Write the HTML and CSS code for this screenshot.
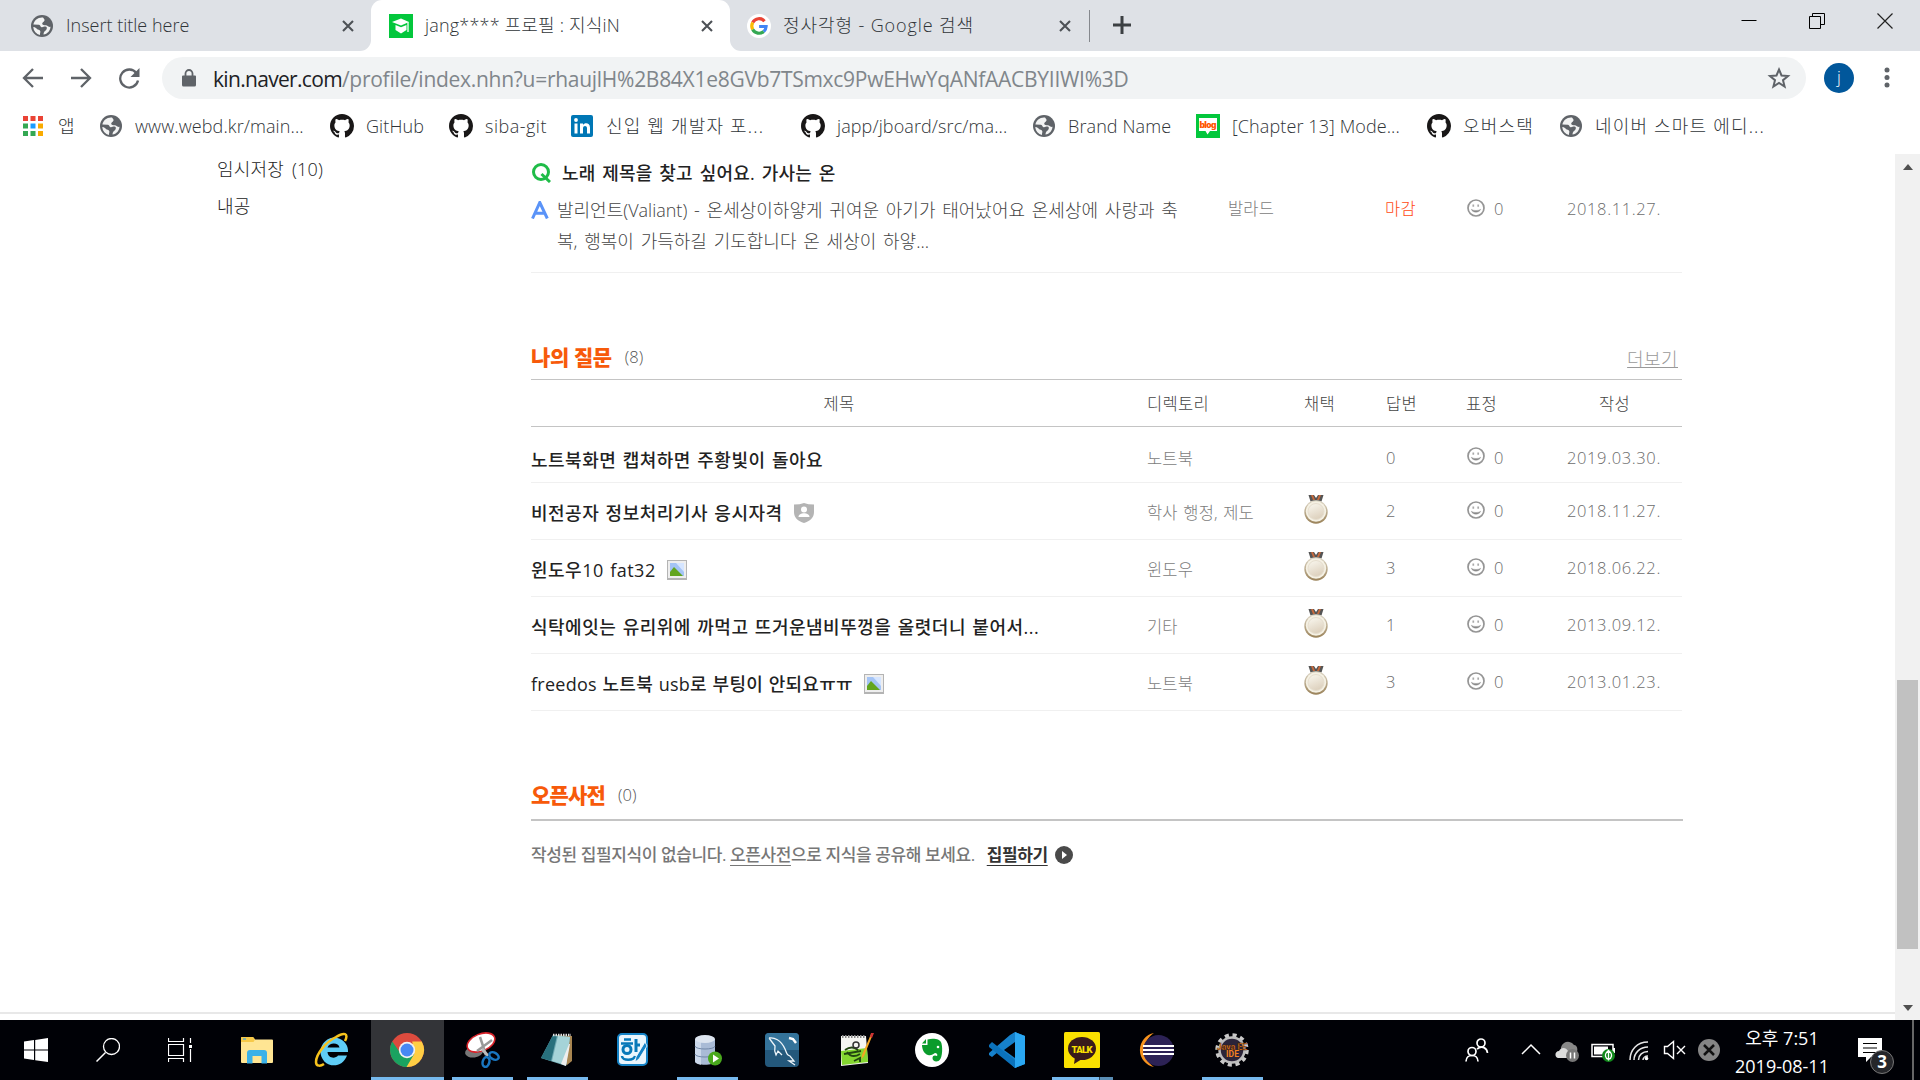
FILE: index.html
```html
<!DOCTYPE html>
<html lang="ko">
<head>
<meta charset="utf-8">
<title>jang**** 프로필 : 지식iN</title>
<link rel="stylesheet" href="styles.css">
</head>
<body>
<svg class="defs" aria-hidden="true">
  <symbol id="globe" viewBox="0 0 22 22"><circle cx="11" cy="11" r="11" fill="#5f6368"/><path d="M12 2.500C7 2 3.300 5.200 2.400 9.500l5.600.3c1.600.2 1.200 2.200 2.500 2.400 1.800.3 2.600-1 4.200-.6 1.600.5 1.400 2.400.4 3.400-1.500 1.300-2.600 2-2.600 4.600 4-.6 6.800-3.800 7-7.800-1.200.4-2.500-.4-3.600-1.200-1.200-.9-3.400 0-4.400-1.200-.8-1 .2-2 1.200-2.600.9-.6 1.100-1.700.6-2.500z" fill="#fff" opacity=".92"/><path d="M2.300 12c.3 4.200 3 7 6.700 7.900-.2-1.700.6-2.300.3-3.600-.4-1.600-2.600-1.400-3.500-2.500-.7-.8-1.800-2-3.500-1.800z" fill="#fff" opacity=".92"/><path d="M13.500 2.800c3 .8 5.500 3 6 7-1.500.7-2.800.2-4-.6-1-.7-3-.2-3-1.300s1.200-1.300 1.500-2.300c.2-.9.100-2-.5-2.800z" fill="#5f6368"/></symbol>
  <symbol id="github" viewBox="0 0 16 16"><path fill="#191717" d="M8 0C3.580 0 0 3.580 0 8c0 3.540 2.290 6.530 5.470 7.590.4.070.55-.17.55-.38 0-.19-.01-.82-.01-1.490-2.010.37-2.530-.49-2.690-.94-.09-.23-.48-.94-.82-1.130-.28-.15-.68-.52-.01-.53.63-.01 1.080.58 1.230.82.72 1.210 1.870.87 2.330.66.070-.52.28-.87.51-1.070-1.780-.2-3.640-.89-3.640-3.950 0-.87.31-1.590.82-2.150-.08-.2-.36-1.020.08-2.120 0 0 .67-.21 2.200.82.64-.18 1.320-.27 2-.27s1.360.09 2 .27c1.530-1.040 2.200-.82 2.200-.82.44 1.100.16 1.920.08 2.120.51.56.82 1.270.82 2.150 0 3.070-1.870 3.750-3.650 3.950.29.25.54.73.54 1.480 0 1.070-.01 1.930-.01 2.200 0 .21.15.46.55.38A8.010 8.010 0 0 0 16 8c0-4.420-3.580-8-8-8z"/></symbol>
  <symbol id="close" viewBox="0 0 12 12"><path d="M1 1l10 10M11 1L1 11" stroke="#4d5156" stroke-width="2.100"/></symbol>
  <symbol id="smile" viewBox="0 0 18 18"><circle cx="9" cy="9" r="8" fill="#fff" stroke="#959595" stroke-width="1.700"/><path d="M6.300 5.500v2.200M11.200 5.500v2.200" stroke="#aaa" stroke-width="1.700"/><path d="M4.300 10.300c1.200 3.800 8 3.800 9.400 0-2 1.600-7.400 1.600-9.400 0z" fill="#858585" stroke="#999" stroke-width=".5"/></symbol>
  <linearGradient id="coin" x1="0" y1="0" x2="0.400" y2="1"><stop offset="0" stop-color="#faf8f0"/><stop offset="1" stop-color="#ded2bf"/></linearGradient>
  <linearGradient id="rim" x1="0" y1="0" x2="0" y2="1"><stop offset="0" stop-color="#ddd6c6"/><stop offset="1" stop-color="#9a8259"/></linearGradient>
  <symbol id="medal" viewBox="0 0 24 29"><path d="M4.500 0H10l2 3 2-3h5.500l-2 6.500h-11z" fill="#555"/><path d="M7 0h2l2 5H9zM15 0h2l-2 5h-2z" fill="#c76a3c"/><circle cx="12" cy="17" r="11.700" fill="url(#rim)"/><circle cx="12" cy="16.500" r="10.200" fill="#f5f1e4"/><circle cx="12" cy="16.500" r="8" fill="url(#coin)" stroke="#e6dece"/></symbol>
  <symbol id="picture" viewBox="0 0 20 20"><path d="M0 0h20v20H0z" fill="#b4b4b4"/><path d="M1 1h18v17H1z" fill="#eee"/><path d="M3 3h14v13H3z" fill="#a4c4f5"/><path d="M9 3l8 0v9z" fill="#d5e5ff"/><path d="M3 16v-4l4-5 9 9z" fill="#62a51f"/></symbol>
</svg>

<header class="tabstrip">
  <div class="tab tab-first"><svg class="i22"><use href="#globe"/></svg><span>Insert title here</span><svg class="x"><use href="#close"/></svg></div>
  <div class="tab tab-active"><svg class="i24" viewBox="0 0 24 24"><path d="M0 0h24v24H0z" fill="#03c73c"/><path d="M3 8l9-3.500 8 3.500-8 3.500z" fill="#fff"/><path d="M6.500 11l5.500 2.300 5.500-2.300v5L12 19.500 6.500 16z" fill="#fff"/><path d="M19 8v10" stroke="#fff" stroke-width="1.300"/></svg><span>jang**** 프로필 : 지식iN</span><svg class="x"><use href="#close"/></svg></div>
  <div class="tab tab-last"><svg class="i24" viewBox="0 0 24 24"><circle cx="12" cy="12" r="12" fill="#fff"/><g fill="none" stroke-width="3.200"><path d="M17.500 7.200A7.200 7.200 0 0 0 5.700 8.500" stroke="#ea4335"/><path d="M5.700 8.500a7.400 7.400 0 0 0 0 7" stroke="#fbbc05"/><path d="M5.700 15.500a7.200 7.200 0 0 0 11 2" stroke="#34a853"/><path d="M16.700 17.500a7 7 0 0 0 2.400-5h-7" stroke="#4285f4"/></g></svg><span>정사각형 - Google 검색</span><svg class="x"><use href="#close"/></svg></div>
  <svg class="plus" viewBox="0 0 18 18"><path d="M9 0v18M0 9h18" stroke="#3c4043" stroke-width="3"/></svg>
  <div class="window-buttons">
    <svg viewBox="0 0 16 16"><path d="M.5 7.500h15" stroke="#000"/></svg>
    <svg viewBox="0 0 16 16"><path d="M.5 3.500h11v12H.5zM3.500 3.500v-3h12v11h-4" fill="none" stroke="#000"/></svg>
    <svg viewBox="0 0 16 16"><path d="M.5.5l15 15M15.500.5l-15 15" stroke="#222" stroke-width="1.200"/></svg>
  </div>
</header>

<div class="toolbar">
  <svg class="nav" viewBox="0 0 22 22"><path d="M21 11H2.500M11 2l-9 9 9 9" fill="none" stroke="#5f6368" stroke-width="2.300"/></svg>
  <svg class="nav" viewBox="0 0 22 22"><path d="M1 11h18.500M11 2l9 9-9 9" fill="none" stroke="#5f6368" stroke-width="2.300"/></svg>
  <svg class="nav" viewBox="0 0 22 22"><path d="M18.500 6.200A9 9 0 1 0 20 13.500" fill="none" stroke="#5f6368" stroke-width="2.300"/><path d="M21.500 1v9h-9z" fill="#5f6368"/></svg>
  <div class="omnibox">
    <svg class="lock" viewBox="0 0 14 18"><path d="M1 6.500h12a1 1 0 0 1 1 1V16a1.500 1.500 0 0 1-1.500 1.500h-11A1.500 1.500 0 0 1 0 16V7.500a1 1 0 0 1 1-1z" fill="#5f6368"/><path d="M3.500 7V4.500a3.500 3.500 0 0 1 7 0V7" fill="none" stroke="#5f6368" stroke-width="1.800"/></svg>
    <div class="url"><span class="host">kin.naver.com</span>/profile/index.nhn?u=rhaujlH%2B84X1e8GVb7TSmxc9PwEHwYqANfAACBYIIWI%3D</div>
    <svg class="star" viewBox="0 0 24 24"><path d="M12 3.500l2.500 6 6.500.5-5 4.200 1.600 6.300-5.600-3.500-5.600 3.500L8 14.200 3 10l6.500-.5z" fill="none" stroke="#5f6368" stroke-width="2"/></svg>
  </div>
  <div class="avatar">j</div>
  <svg class="dots" viewBox="0 0 6 22"><g fill="#5f6368"><circle cx="3" cy="3" r="2.500"/><circle cx="3" cy="10.500" r="2.500"/><circle cx="3" cy="18" r="2.500"/></g></svg>
</div>

<nav class="bookmarks">
  <a class="apps"><svg class="i20" viewBox="0 0 20 20"><g fill="#ea4335"><path d="M0 0h5v5H0zM7.500 0h5v5h-5zM15 0h5v5h-5z"/></g><path d="M0 7.500h5v5H0zM0 15h5v5H0zM7.500 15h5v5h-5z" fill="#34a853"/><path d="M7.500 7.500h5v5h-5z" fill="#1a9bff"/><path d="M15 7.500h5v5h-5zM15 15h5v5h-5z" fill="#f9ab00"/></svg><span>앱</span></a>
  <a><svg class="i22"><use href="#globe"/></svg><span>www.webd.kr/main...</span></a>
  <a><svg class="i24"><use href="#github"/></svg><span>GitHub</span></a>
  <a><svg class="i24"><use href="#github"/></svg><span class="loose">siba-git</span></a>
  <a><svg class="i22" viewBox="0 0 22 22"><rect width="22" height="22" rx="2" fill="#0077b5"/><path d="M3.500 8.500h3v10h-3zM9 8.500h3V10c1.500-2.500 7-2.500 7 2.500v6h-3v-5.300c0-3-4-3-4 0v5.300H9z" fill="#fff"/><circle cx="5" cy="5" r="1.900" fill="#fff"/></svg><span class="hangul">신입 웹 개발자 포...</span></a>
  <a><svg class="i24"><use href="#github"/></svg><span>japp/jboard/src/ma...</span></a>
  <a><svg class="i22"><use href="#globe"/></svg><span>Brand Name</span></a>
  <a><svg class="i24" viewBox="0 0 24 24"><path d="M0 0h24v24H0z" fill="#03c73c"/><path d="M3 4h18v13h-7l-2.500 3.500L9.500 17H3z" fill="#fff"/><text x="3.500" y="13.500" font-size="8.500" font-weight="900" fill="#f50" textLength="17" font-family="Inter">blog</text></svg><span>[Chapter 13] Mode...</span></a>
  <a><svg class="i24"><use href="#github"/></svg><span class="hangul">오버스택</span></a>
  <a><svg class="i22"><use href="#globe"/></svg><span class="hangul">네이버 스마트 에디...</span></a>
</nav>

<div class="viewport">
  <main class="page">
    <aside class="side"><a>임시저장 (10)</a><a>내공</a></aside>
    <div class="content">
      <section class="answer">
        <h3 class="qline"><svg class="i20" viewBox="0 0 20 20"><circle cx="10" cy="9" r="7.500" fill="none" stroke="#1fbc48" stroke-width="3"/><path d="M10.500 11l8.500 8" stroke="#1fbc48" stroke-width="3"/></svg><span>노래 제목을 찾고 싶어요. 가사는 온</span></h3>
        <div class="arow">
          <div class="abody"><svg class="amark" viewBox="0 0 18 18"><path d="M1.500 17.500L8.800 1.500l7.500 16M4.500 12.300h9" fill="none" stroke="#5a93f8" stroke-width="3"/></svg><p>발리언트(Valiant) - 온세상이하얗게 귀여운 아기가 태어났어요 온세상에 사랑과 축<br>복, 행복이 가득하길 기도합니다 온 세상이 하얗...</p></div>
          <span class="dir">발라드</span><span class="closed">마감</span><span class="emo"><svg><use href="#smile"/></svg>0</span><span class="date">2018.11.27.</span>
        </div>
      </section>

      <section class="questions">
        <div class="section-head"><h2>나의 질문</h2><span class="cnt">(8)</span><a class="more">더보기</a></div>
        <div class="row thead"><span class="center">제목</span><span>디렉토리</span><span>채택</span><span>답변</span><span>표정</span><span class="written">작성</span></div>
        <div class="row first"><span class="title"><b>노트북화면 캡쳐하면 주황빛이 돌아요</b></span><span class="dir">노트북</span><span></span><span class="num">0</span><span class="emo"><svg><use href="#smile"/></svg>0</span><span class="date">2019.03.30.</span></div>
        <div class="row"><span class="title"><b>비전공자 정보처리기사 응시자격</b><svg class="i20" viewBox="0 0 20 20"><path d="M0 1.500Q6 1.500 10 0q4 1.500 10 1.500V9c0 6-4 9-10 11C4 18 0 15 0 9z" fill="#b4b4b4"/><circle cx="10" cy="6.500" r="3" fill="#fff"/><path d="M4.500 14c0-5 11-5 11 0z" fill="#fff"/></svg></span><span class="dir">학사 행정, 제도</span><span class="medal"><svg><use href="#medal"/></svg></span><span class="num">2</span><span class="emo"><svg><use href="#smile"/></svg>0</span><span class="date">2018.11.27.</span></div>
        <div class="row"><span class="title"><b>윈도우10 fat32</b><svg class="i20 pic"><use href="#picture"/></svg></span><span class="dir">윈도우</span><span class="medal"><svg><use href="#medal"/></svg></span><span class="num">3</span><span class="emo"><svg><use href="#smile"/></svg>0</span><span class="date">2018.06.22.</span></div>
        <div class="row"><span class="title"><b>식탁에잇는 유리위에 까먹고 뜨거운냄비뚜껑을 올렷더니 붙어서...</b></span><span class="dir">기타</span><span class="medal"><svg><use href="#medal"/></svg></span><span class="num">1</span><span class="emo"><svg><use href="#smile"/></svg>0</span><span class="date">2013.09.12.</span></div>
        <div class="row"><span class="title"><b class="mixed">freedos 노트북 usb로 부팅이 안되요ㅠㅠ</b><svg class="i20 pic"><use href="#picture"/></svg></span><span class="dir">노트북</span><span class="medal"><svg><use href="#medal"/></svg></span><span class="num">3</span><span class="emo"><svg><use href="#smile"/></svg>0</span><span class="date">2013.01.23.</span></div>
      </section>

      <section class="opendic">
        <div class="section-head"><h2>오픈사전</h2><span class="cnt">(0)</span></div>
        <p class="empty"><span>작성된 집필지식이 없습니다. <u>오픈사전</u>으로 지식을 공유해 보세요.</span><a class="write">집필하기</a><svg class="go" viewBox="0 0 18 18"><circle cx="9" cy="9" r="9" fill="#4a4a4a"/><path d="M7 5l5 4-5 4z" fill="#fff"/></svg></p>
      </section>
    </div>
  </main>
  <div class="scrollbar"><i class="up"></i><i class="thumb"></i><i class="down"></i></div>
</div>

<footer class="taskbar">
  <div class="sys">
    <svg viewBox="0 0 24 24"><path d="M0 3.500l10-1.400v9.400H0zM11.200 2L24 0v11.500H11.200zM0 12.600h10V22L0 20.500zM11.200 12.600H24V24l-12.800-1.800z" fill="#fff"/></svg>
    <svg viewBox="0 0 24 24"><circle cx="15.500" cy="8.500" r="8" fill="none" stroke="#fff" stroke-width="1.300"/><path d="M9.500 14.500L.5 23.500" stroke="#fff" stroke-width="1.500"/></svg>
    <svg viewBox="0 0 24 24"><path d="M.5 0v3.500h15V0M.5 24v-3.500h15V24M.5 6.500h15v11H.5zM22.500 0v5M22.500 11v13" fill="none" stroke="#fff" stroke-width="1.200"/><path d="M21 7h3v3h-3z" fill="#fff"/></svg>
  </div>
  <div class="apps-row">
    <div class="app"><svg viewBox="0 0 36 36"><path d="M2 6q0-1 1-1h11l2 2.500h17q1 0 1 1V30q0 1-1 1H3q-1 0-1-1z" fill="#ffe593"/><path d="M2 6q0-1 1-1h11l2 2.500L14.500 10H2z" fill="#f7c948"/><path d="M4 7h3" stroke="#3ba7e6" stroke-width="1.200"/><path d="M8 31.500V21q0-3 3-3h14q3 0 3 3v10.500h-5.500V24h-9v7.500z" fill="#3bb1e8"/></svg></div>
    <div class="app"><svg viewBox="0 0 36 36"><path d="M34 20H13.500c.4 6.500 8 7 10.500 3.500h9C30 32 22 35 15 32.500S4 20 8 13.500 18 4 25 6.500c6 2.500 9.500 7.500 9 13.500zM13.500 15.500h12c-.6-5.500-10.500-5.500-12 0z" fill="#5fcdf6"/><path d="M31 9c4-8-1-9-9-4C12 10 2 22 2 30c0 5 5 4 8 2" fill="none" stroke="#f6c21c" stroke-width="2.500"/></svg></div>
    <div class="app on current"><svg viewBox="0 0 36 36"><circle cx="18" cy="18" r="17" fill="#dd4b3e"/><path d="M3.300 9.500A17 17 0 0 0 18 35l8-13.500-15-1z" fill="#1aa260"/><path d="M32.700 9.500A17 17 0 0 1 17.500 35l7.700-13-2-12.500z" fill="#ffce44"/><circle cx="18" cy="18" r="8.200" fill="#f1f1f1"/><circle cx="18" cy="18" r="6.500" fill="#4688f4"/></svg></div>
    <div class="app on"><svg viewBox="0 0 36 36"><ellipse cx="10" cy="20" rx="9" ry="5.500" fill="#777" transform="rotate(-8 10 20)"/><ellipse cx="17" cy="10.500" rx="14.500" ry="8.500" fill="#fff" stroke="#d8232a" stroke-width="1.600" transform="rotate(-22 17 10.500)"/><path d="M16 5l6 18M28 8L13 19" stroke="#999" stroke-width="2.500"/><path d="M18 17l6 7" stroke="#bbb" stroke-width="3"/><ellipse cx="22" cy="30" rx="3.300" ry="5" fill="none" stroke="#1976c0" stroke-width="2.500" transform="rotate(15 22 30)"/><ellipse cx="30" cy="24" rx="5" ry="3.300" fill="none" stroke="#1976c0" stroke-width="2.500" transform="rotate(30 30 24)"/></svg></div>
    <div class="app on"><svg viewBox="0 0 36 36"><path d="M15 3l18 1v25l-5 4-6-4z" fill="#a88651"/><path d="M14 3l17 2-4 29L2 26z" fill="#6ea9b3"/><path d="M14 3l4 .5L12 29 2 26z" fill="#28707d"/><path d="M19 4l12 1-4 28-14-4z" fill="#a5d3d8"/><path d="M14 3h18" stroke="#ddd" stroke-width="2.500" stroke-dasharray="1.500 1"/><path d="M22 32l5 2 4-22h-1z" fill="#eee"/></svg></div>
    <div class="app"><svg viewBox="0 0 36 36"><rect x="4" y="2" width="29" height="31" rx="4" fill="#eaf6fd" stroke="#1482c5" stroke-width="2"/><path d="M10 7.500h7M7 11.500h12" stroke="#0879b9" stroke-width="2.500"/><circle cx="13" cy="17.500" r="4" fill="none" stroke="#0879b9" stroke-width="3"/><path d="M22 7v13M22 13h4" fill="none" stroke="#0879b9" stroke-width="3"/><path d="M8 24c0 5 12 5 13 0" fill="none" stroke="#0879b9" stroke-width="2.500"/><path d="M31 10L22 25l-1 5 4-3 8-13z" fill="#1482c5" stroke="#fff" stroke-width=".8"/></svg></div>
    <div class="app on"><svg viewBox="0 0 36 36"><path d="M6 7v22c0 5 20 5 20 0V7z" fill="#a9bbd6"/><path d="M6 7v22c0 2 3 3.500 6 3.700V8z" fill="#cbd8ea"/><path d="M6 14c0 4 20 4 20 0M6 22c0 4 20 4 20 0" fill="none" stroke="#7288a8"/><ellipse cx="16" cy="7" rx="10" ry="4" fill="#dce4ef"/><circle cx="26" cy="26.500" r="7" fill="#49a81d"/><path d="M24 22.500l6 4-6 4z" fill="#fff"/></svg></div>
    <div class="app"><svg viewBox="0 0 36 36"><rect x="1" y="1" width="34" height="34" rx="4" fill="#24587b"/><path d="M1 5q0-4 4-4h26q4 0 4 4v13H1z" fill="#34739a"/><path d="M5 6c5-1 12 2 16 11 2 5 2 6 5 7l4 5h-5l6 4M5 6l6 8c-1 5 0 7 1 9l2-4 4 4" fill="none" stroke="#eef5f9" stroke-width="1.300"/><path d="M25 6l4 1 3 4" stroke="#fff" stroke-width="2.500" fill="none"/></svg></div>
    <div class="app"><svg viewBox="0 0 36 36"><path d="M2 4h25l2 27-27 3z" fill="#f5f5f2"/><path d="M2 19l26-3 1 14-26 3z" fill="#84d630"/><path d="M3 4.500h24" stroke="#888" stroke-width="3" stroke-dasharray="1.500 1.500"/><path d="M6 18q7-5 13 0M5 22l17-3M8 20q5 7 13 2M15 29l6-3v4" fill="none" stroke="#224511" stroke-width="1.900"/><circle cx="17" cy="13" r="3" fill="none" stroke="#333" stroke-width="1.500"/><path d="M34 2L25 24l-2.500 3 .5-4L32 2z" fill="#f4a622"/><path d="M32 1h3l-2 5-2-1z" fill="#c33"/></svg></div>
    <div class="app"><svg viewBox="0 0 36 36"><circle cx="18" cy="18" r="17" fill="#fff"/><path d="M8 13h5.500V7.500c6-1.500 13-.500 14 4 1.500 6 .5 16-3 17.500-3 1-6 0-6-3s3-3 4.500-2c1-1 0-3-2-3-2 1-4 3-7 2-4-1-6-6-6-10z" fill="#0a9c2c"/><path d="M8 11.500L12 7v4.500z" fill="#0a9c2c"/><circle cx="24" cy="15" r="1.300" fill="#fff"/></svg></div>
    <div class="app"><svg viewBox="0 0 36 36"><path d="M26 0l10 4v28l-10 4L9 20l-6 5-3-2v-2L21 3z" fill="#1681cb"/><path d="M0 13l3-3 23 18v8L0 15z" fill="#0b72bb"/><path d="M26 0l10 4v28l-10 4z" fill="#2aa7f2"/><path d="M26 10v16L15 18z" fill="#000106"/></svg></div>
    <div class="app on multi"><svg viewBox="0 0 36 36"><rect width="36" height="36" rx="1.500" fill="#fae100"/><ellipse cx="18" cy="16.500" rx="14" ry="11.500" fill="#391b1b"/><path d="M11 25l-1 7 8-5z" fill="#391b1b"/><text x="7.500" y="20.500" font-size="9.500" font-weight="900" fill="#fae100" textLength="21" font-family="Roboto">TALK</text></svg></div>
    <div class="app"><svg viewBox="0 0 36 36"><path d="M15 1A17.300 17.300 0 0 0 15 35A20 20 0 0 1 15 1z" fill="#f7941e"/><circle cx="19.500" cy="18.500" r="15.500" fill="#2c2255"/><path d="M4 14h31M4 18h31M4 22h31" stroke="#fff" stroke-width="2"/></svg></div>
    <div class="app on"><svg viewBox="0 0 36 36"><circle cx="18" cy="18" r="14.500" fill="none" stroke="#c9c9c9" stroke-width="4.500" stroke-dasharray="4 3.600"/><circle cx="18" cy="18" r="12.500" fill="#2b2439" stroke="#bdbdbd" stroke-width="2.500"/><text x="3" y="17.500" font-size="8.500" font-weight="700" fill="#f4811f" stroke="#301400" stroke-width=".3" textLength="30" font-family="Roboto">Java EE</text><text x="12" y="25" font-size="8.500" font-weight="700" fill="#f4811f" textLength="13" font-family="Roboto">IDE</text></svg></div>
  </div>
  <div class="tray">
    <svg viewBox="0 0 24 24"><g fill="none" stroke="#fff" stroke-width="1.700"><circle cx="16" cy="5" r="4"/><circle cx="7" cy="13.500" r="4"/><path d="M1 23.500c0-8 12-8 12 0M12 11c5-4 10-1 10.500 4"/></g></svg>
    <svg viewBox="0 0 24 24"><path d="M3 16l9-9 9 9" fill="none" stroke="#fff" stroke-width="1.500"/></svg>
    <svg viewBox="0 0 24 24"><path d="M7 15a6.500 6.500 0 0 1 12-8c4 0 5 8 0 9z" fill="#888"/><path d="M3 20c-4-1-3-7 1-7 2-4 7-4 9 0l5 7z" fill="#ddd"/><circle cx="17.500" cy="17.500" r="6.500" fill="#777"/><path d="M15.500 14.500v6M19.500 14.500v6" stroke="#fff" stroke-width="1.500"/></svg>
    <svg viewBox="0 0 24 24"><path d="M1 6.500h21v12H1z" fill="none" stroke="#fff" stroke-width="1.500"/><path d="M3 8.500h14v8H3zM22 10h2v5h-2z" fill="#fff"/><circle cx="17.500" cy="17.500" r="6.500" fill="#10891b"/><path d="M17.500 12.500c-5 4-3 8 0 9 3-1 5-5 0-9v10" fill="none" stroke="#fff" stroke-width="1.300"/></svg>
    <svg viewBox="0 0 24 24"><g fill="none" stroke="#fff" stroke-width="1.500"><path d="M3 22C3 12 10 4 21 4M7 22c0-7 6-13 14-13M11.500 22c0-5 4-8.500 9.500-8.500M16 22c0-2 2-4 5-4" opacity=".9"/></g><circle cx="19.500" cy="20.500" r="1.800" fill="#fff"/></svg>
    <svg class="speaker" viewBox="0 0 24 24"><path d="M2.500 8.500h3l6-5v17l-6-5h-3z" fill="none" stroke="#fff" stroke-width="1.400"/><path d="M15 8l8 8M23 8l-8 8" stroke="#fff" stroke-width="1.400"/></svg>
    <svg viewBox="0 0 24 24"><circle cx="12" cy="12" r="11" fill="#858585"/><path d="M7 7l10 10M17 7L7 17" stroke="#111" stroke-width="2.500"/></svg>
    <div class="clock"><span>오후 7:51</span><span>2019-08-11</span></div>
    <div class="notify"><svg viewBox="0 0 36 38"><path d="M0 0h24v19H13l-5 5v-5H0z" fill="#fff"/><path d="M5 5.500h14M5 10h14M5 14.500h14" stroke="#000" stroke-width="1.200"/><circle cx="24" cy="24" r="11.500" fill="#25262a" stroke="#777"/><text x="24" y="30" font-size="17" font-weight="700" fill="#fff" text-anchor="middle">3</text></svg></div>
    <i class="edge"></i>
  </div>
</footer>
</body>
</html>
```
FILE: styles.css
```css
* { box-sizing: border-box; }
body {
  margin: 0; width: 1920px; height: 1080px; overflow: hidden; background: #fff;
  font: 300 18px/24px "Open Sans", "Noto Sans CJK KR", sans-serif;
  color: #303438; display: flex; flex-direction: column; white-space: nowrap;
}
svg { display: block; flex: none; }
.defs { position: absolute; width: 0; height: 0; }
h2, h3, p { margin: 0; font-size: inherit; font-weight: inherit; }
.i20 { width: 20px; height: 20px; }
.i22 { width: 22px; height: 22px; margin: 0 1px; }
.i24 { width: 24px; height: 24px; }

/* tab strip */
.tabstrip { height: 51px; flex: none; background: #fff; display: flex; }
.tab { display: flex; align-items: center; gap: 12px; background: #dee1e6; }
.tab span { padding-bottom: 2px; }
.tab .x { width: 12px; height: 12px; margin-left: auto; }
.tab-first { width: 371px; padding: 0 17px 0 30px; border-radius: 0 0 11px 0; }
.tab-active { width: 359px; padding: 0 17px 0 18px; background: linear-gradient(#dee1e6 20px, transparent 0); position: relative; z-index: 0; letter-spacing: .19px; }
.tab-active::before { content: ""; position: absolute; z-index: -1; inset: 0; background: #fff; border-radius: 11px 11px 0 0; }
.tab-last { width: 360px; padding: 0 18px 0 17px; border-radius: 0 0 0 11px; border-right: 1px solid #85888d; border-image: linear-gradient(#dee1e6 11px, #85888d 11px, #85888d 41px, #dee1e6 41px) 1; letter-spacing: .9px; }
.plus { width: 18px; height: 18px; }
.tabstrip > .plus { box-sizing: content-box; padding: 16px 0 17px 23px; background: #dee1e6; }
.window-buttons { flex: 1; display: flex; justify-content: flex-end; gap: 52px; padding: 13px 27px 0 0; background: #dee1e6; }
.window-buttons svg { width: 16px; height: 16px; }

/* toolbar */
.toolbar { height: 54px; flex: none; display: flex; align-items: center; padding-left: 22px; }
.nav { width: 22px; height: 22px; margin-right: 26px; }
.omnibox { width: 1644px; height: 42px; margin-left: -4px; border-radius: 21px; background: #f1f3f4; display: flex; align-items: center; padding: 0 15px 0 20px; }
.lock { width: 14px; height: 18px; margin-right: 17px; }
.url { flex: 1; font-size: 21px; font-weight: 400; color: #80868b; letter-spacing: -.28px; padding-top: 1px; }
.host { color: #202124; letter-spacing: -.68px; }
.star { width: 24px; height: 24px; }
.avatar { width: 30px; height: 30px; border-radius: 50%; background: #01579b; color: #fff; margin-left: 18px; text-align: center; line-height: 27px; font-size: 17px; }
.dots { width: 6px; height: 22px; margin-left: 30px; }

/* bookmarks */
.bookmarks { height: 49px; flex: none; padding: 0 0 7px 22px; display: grid; grid-template-columns: 77px 230px 119px 122px 230px 232px 163px 231px 133px 210px; align-items: center; letter-spacing: .1px; }
.bookmarks a { display: flex; align-items: center; gap: 12px; }
.bookmarks span { padding-bottom: 1px; }
.bookmarks .apps { gap: 15px; }
.bookmarks .i24, .bookmarks .i20 { margin-left: 1px; }
.bookmarks .loose { letter-spacing: .5px; }
.bookmarks .hangul { letter-spacing: 1.18px; }

/* page */
.viewport { height: 866px; flex: none; display: flex; }
.page { width: 1895px; display: flex; border-bottom: 6px solid #fff; box-shadow: inset 0 -2px #e8e8e8; }
.side { width: 531px; padding: 3px 0 0 217px; display: flex; flex-direction: column; gap: 13px; color: #222; word-spacing: 3px; letter-spacing: .2px; }
.content { width: 1152px; }
.answer { height: 119px; border-bottom: 1px solid #f0f0f0; margin-right: 1px; }
.qline { display: flex; gap: 11px; padding-top: 7px; align-items: center; color: #222; font-weight: 500; letter-spacing: .2px; word-spacing: 1.900px; }
.arow { display: grid; grid-template-columns: 697px 157px 81px 101px 115px; padding-top: 10px; font-size: 16.500px; }
.arow > :not(.abody) { padding-top: 2px; }
.abody { display: flex; gap: 8px; font-size: 18px; line-height: 31px; color: #444; word-spacing: 2.100px; }
.amark { width: 18px; height: 18px; margin-top: 6px; }
.dir { color: #7c7c7c; font-size: 16.500px; letter-spacing: .15px; word-spacing: 1.200px; }
.closed { color: #ff4a10; letter-spacing: .3px; }
.emo { display: flex; gap: 9px; color: #6c6c6c; align-items: center; align-self: start; }
.emo svg { width: 18px; height: 18px; margin: -3px 0 0 1px; }
.date, .num { color: #6c6c6c; font-size: 16.500px; letter-spacing: .62px; }
.section-head { display: flex; align-items: center; margin-right: 1px; border-bottom: 1px solid #c4c4c4; color: #555; font-size: 16.500px; }
.section-head h2 { font-size: 21px; font-weight: 900; color: #f75a0a; margin-right: 13px; letter-spacing: -.4px; }
.questions .section-head { height: 53px; margin-top: 54px; padding-top: 8px; }
.more { margin: 4px 4px 0 auto; font-size: 18px; color: #999; text-decoration: underline; letter-spacing: .4px; }
.row { display: grid; grid-template-columns: 616px 157px 82px 80px 101px 115px; height: 57px; margin-right: 1px; border-bottom: 1px solid #f0f0f0; align-items: center; font-size: 16.500px; }
.row .emo { align-self: center; }
.thead { height: 47px; padding-top: 2px; border-color: #c4c4c4; color: #444; letter-spacing: .3px; }
.center { text-align: center; }
.written { padding-left: 32px; }
.row.first { height: 56px; padding-top: 6px; }
.title { display: flex; gap: 11px; align-items: center; font-size: 18px; color: #222; padding-top: 4px; }
.row .dir { padding-top: 3px; }
.title b { font-weight: 500; letter-spacing: .5px; word-spacing: 1.200px; }
.title .mixed { letter-spacing: .25px; word-spacing: .8px; }
.medal svg { width: 24px; height: 29px; margin-top: -3px; }
.opendic .section-head { height: 110px; padding-top: 60px; border-bottom-width: 2px; margin-right: 0; }
.opendic h2 { letter-spacing: -.8px; }
.empty { display: flex; align-items: center; margin-top: 22px; font-size: 17px; font-weight: 500; color: #777; letter-spacing: -.4px; }
.empty u, .write { text-underline-offset: 4px; }
.write { margin-left: 12px; font-weight: 700; color: #333; text-decoration: underline; }
.go { width: 18px; height: 18px; margin-left: 7px; }
.scrollbar { width: 25px; background: #f1f1f1; display: flex; flex-direction: column; align-items: center; }
.scrollbar .up { border: 5.500px solid transparent; border-top: 0; border-bottom: 6px solid #505050; margin-top: 10px; }
.scrollbar .thumb { width: 21px; height: 269px; margin-top: 510px; background: #c1c1c1; }
.scrollbar .down { border: 5.500px solid transparent; border-bottom: 0; border-top: 6px solid #505050; margin-top: 56px; }

/* taskbar */
.taskbar { height: 60px; background: #000106; display: flex; }
.sys { width: 220px; display: flex; }
.sys svg { width: 24px; height: 24px; margin: 18px 24px; }
.apps-row { display: flex; }
.app { width: 75px; height: 60px; border: solid transparent; border-width: 0 8px 3px 6px; display: flex; justify-content: center; padding-top: 12px; background-clip: padding-box; }
.app svg { width: 36px; height: 36px; }
.app.on { background: linear-gradient(#76b9ed, #76b9ed) 50% 100% / 61px 3px no-repeat border-box; }
.app.current { border-width: 0 1px 3px; background: linear-gradient(#76b9ed, #76b9ed) 50% 100% / 73px 3px no-repeat border-box, #333438 padding-box; }
.app.current svg { margin-left: -1px; }
.app.multi { background: linear-gradient(90deg, #76b9ed 47px, #000106 47px, #5a8db4 48px) 50% 100% / 61px 3px no-repeat border-box; }
.tray { flex: 1; display: flex; color: #fff; }
.tray > svg { width: 24px; height: 24px; margin-top: 18px; margin-right: 12px; }
.tray > svg:first-child { margin-left: 195px; margin-right: 30px; }
.tray > .speaker { margin-left: -1px; margin-right: 11px; }
.clock { display: flex; flex-direction: column; align-items: center; width: 94px; margin-left: 2px; padding-top: 4px; line-height: 28px; font-weight: 400; }
.notify { margin: 18px 0 0 29px; }
.notify svg { width: 36px; height: 38px; }
.edge { width: 2px; height: 60px; margin-left: auto; margin-right: 6px; background: #666; }
```
